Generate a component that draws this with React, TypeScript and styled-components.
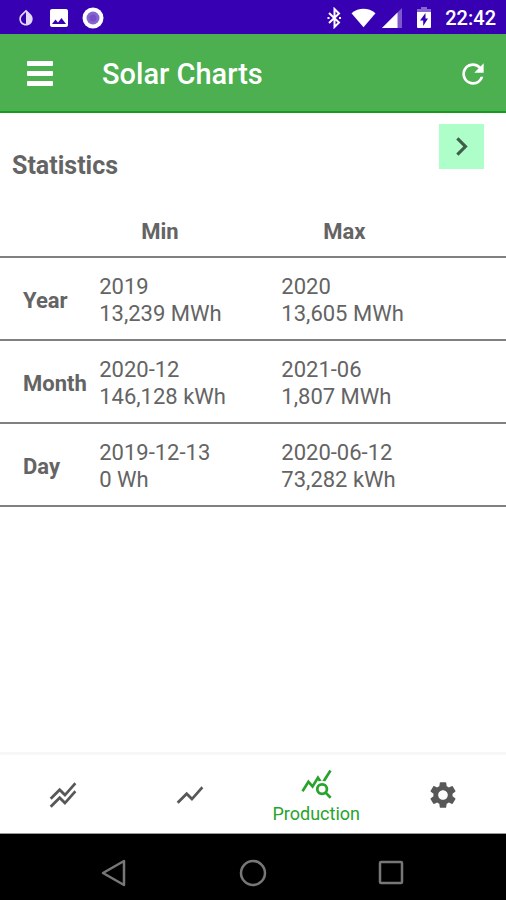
import React from 'react';
import styled, { createGlobalStyle } from 'styled-components';
import {
  MdChevronRight,
  MdImage,
  MdInvertColors,
  MdQueryStats,
  MdRefresh,
  MdSettings,
  MdShowChart,
  MdStackedLineChart,
} from 'react-icons/md';

const GlobalStyle = createGlobalStyle`
  * { box-sizing: border-box; }
  body {
    margin: 0;
    background: #fff;
    color: #646464;
    font-family: Roboto, "Liberation Sans", sans-serif;
  }
  button { font: inherit; border: 0; padding: 0; background: none; cursor: pointer; }
  svg { display: block; flex: none; }
`;

const Screen = styled.div`
  display: flex;
  flex-direction: column;
  min-height: 100vh;
`;

const StatusBar = styled.div`
  display: flex;
  align-items: center;
  justify-content: space-between;
  height: 34px;
  padding: 1px 10px 0 16px;
  background: #3700b3;
  color: #fff;
`;

const StatusGroup = styled.div<{ $gap: number }>`
  display: flex;
  align-items: center;
  gap: ${({ $gap }) => $gap}px;
`;

const Clock = styled.time`
  font-size: 20px;
  font-weight: 500;
  line-height: 24px;
`;

const AppBar = styled.header`
  display: flex;
  align-items: center;
  height: 79px;
  padding: 3px 17px 0 20px;
  background: #4caf50;
  border-bottom: 2px solid #169c1c;
  color: #fff;
`;

const BarButton = styled.button`
  display: grid;
  place-items: center;
  width: 40px;
  height: 40px;
  color: #fff;
`;

const RefreshButton = styled(BarButton)`
  width: 32px;
`;

const AppTitle = styled.h1`
  flex: 1;
  margin: 0 0 0 42px;
  font-size: 29px;
  font-weight: 500;
  line-height: 36px;
`;

const Main = styled.main`
  flex: 1;
`;

const SectionHead = styled.div`
  display: flex;
  align-items: flex-start;
  justify-content: space-between;
  padding: 11px 22px 0 12px;
`;

const SectionTitle = styled.h2`
  margin: 27px 0 0;
  font-size: 25px;
  font-weight: 700;
  line-height: 30px;
`;

const NextButton = styled.button`
  display: grid;
  place-items: center;
  width: 45px;
  height: 45px;
  background: #adfec8;
  color: #3f5d49;
`;

const StatsTable = styled.table`
  width: 100%;
  margin-top: 37px;
  border-collapse: collapse;
  table-layout: fixed;
  font-size: 22px;
  line-height: 27px;
  text-align: left;

  tr { border-bottom: 2px solid #808080; }
`;

const Column = styled.col<{ $share?: string }>`
  width: ${({ $share }) => $share ?? 'auto'};
`;

const ColumnHead = styled.th`
  padding: 0 0 11px 42px;
  font-weight: 700;
`;

const RowHead = styled.th`
  padding: 3px 0 0 23px;
  font-weight: 700;
`;

const Value = styled.td`
  padding: 15px 0 12px;
`;

const TabBar = styled.nav`
  display: grid;
  grid-template-columns: repeat(4, 1fr);
  height: 82px;
  border-top: 3px solid #f7f7f7;
  border-bottom: 1px solid #9a9a9a;
`;

const Tab = styled.button<{ $active?: boolean }>`
  display: flex;
  flex-direction: column;
  align-items: center;
  justify-content: center;
  gap: 4px;
  padding-top: 2px;
  color: ${({ $active }) => ($active ? '#28a32d' : '#585858')};
`;

const TabLabel = styled.span`
  font-size: 18px;
  line-height: 20px;
`;

const SystemBar = styled.div`
  display: flex;
  align-items: center;
  justify-content: center;
  gap: 98px;
  height: 66px;
  padding-top: 12px;
  background: #000;
`;

const SystemButton = styled.button`
  display: grid;
  place-items: center;
  width: 40px;
  height: 40px;
`;

const RecordIcon = () => (
  <svg width="22" height="22" viewBox="0 0 22 22" aria-hidden="true">
    <circle cx="11" cy="11" r="10.5" fill="#fff" />
    <circle cx="11" cy="11" r="6.5" fill="#8766d0" />
    <circle cx="11" cy="11" r="3.5" fill="#7550c8" />
  </svg>
);

const BluetoothIcon = () => (
  <svg width="22" height="22" viewBox="0 0 22 22" fill="none" stroke="#fff" strokeWidth="2" aria-hidden="true">
    <path d="M6 6l10 9.500-4.500 4.500V2L16 6.500 6 16" />
    <path d="M4.500 11h2M16 11h2" />
  </svg>
);

const WifiIcon = () => (
  <svg width="25" height="20" viewBox="0 0 26 20" aria-hidden="true">
    <path d="M.5 5C8-1 18-1 25.500 5L13 19.500z" fill="#fff" />
  </svg>
);

const SignalIcon = () => (
  <svg width="21" height="20" viewBox="0 0 21 20" aria-hidden="true">
    <path d="M0 20 20 0v20z" fill="#fff" opacity=".35" />
    <path d="M0 20 15.500 4.500V20z" fill="#fff" />
  </svg>
);

const BatteryIcon = () => (
  <svg width="14" height="22" viewBox="0 0 14 22" aria-hidden="true">
    <path d="M4 0h6v2h4v4H0V2h4z" fill="#fff" opacity=".4" />
    <path d="M0 5h14v15a1 1 0 0 1-1 1H1a1 1 0 0 1-1-1z" fill="#fff" />
    <path d="M8.500 6 3 13.500h3.200V19L11 11.500H8.500z" fill="#3700b3" />
  </svg>
);

const MenuIcon = () => (
  <svg width="26" height="26" viewBox="0 0 26 26" fill="#fff" aria-hidden="true">
    <rect y="0" width="26" height="5" rx="1" />
    <rect y="10" width="26" height="5" rx="1" />
    <rect y="20" width="26" height="5" rx="1" />
  </svg>
);

const systemIcons = [
  { label: 'Back', shape: <path d="M24 3v24L3 15z" /> },
  { label: 'Home', shape: <circle cx="15" cy="15" r="12" /> },
  { label: 'Recent apps', shape: <rect x="4" y="4" width="22" height="21" rx="1" /> },
];

const rows = [
  { period: 'Year', min: ['2019', '13,239 MWh'], max: ['2020', '13,605 MWh'] },
  { period: 'Month', min: ['2020-12', '146,128 kWh'], max: ['2021-06', '1,807 MWh'] },
  { period: 'Day', min: ['2019-12-13', '0 Wh'], max: ['2020-06-12', '73,282 kWh'] },
];

export default function App() {
  return (
    <Screen>
      <GlobalStyle />
      <StatusBar>
        <StatusGroup $gap={11}>
          <MdInvertColors size={20} color="#e2daf5" />
          <MdImage size={24} />
          <RecordIcon />
        </StatusGroup>
        <StatusGroup $gap={14}>
          <StatusGroup $gap={6}>
            <BluetoothIcon />
            <WifiIcon />
            <SignalIcon />
          </StatusGroup>
          <BatteryIcon />
          <Clock>22:42</Clock>
        </StatusGroup>
      </StatusBar>

      <AppBar>
        <BarButton type="button" aria-label="Menu"><MenuIcon /></BarButton>
        <AppTitle>Solar Charts</AppTitle>
        <RefreshButton type="button" aria-label="Refresh"><MdRefresh size={32} /></RefreshButton>
      </AppBar>

      <Main>
        <SectionHead>
          <SectionTitle>Statistics</SectionTitle>
          <NextButton type="button" aria-label="Next"><MdChevronRight size={37} /></NextButton>
        </SectionHead>
        <StatsTable>
          <colgroup>
            <Column $share="19.6%" />
            <Column $share="36%" />
            <Column />
          </colgroup>
          <thead>
            <tr>
              <td />
              <ColumnHead scope="col">Min</ColumnHead>
              <ColumnHead scope="col">Max</ColumnHead>
            </tr>
          </thead>
          <tbody>
            {rows.map(({ period, min, max }) => (
              <tr key={period}>
                <RowHead scope="row">{period}</RowHead>
                <Value>{min[0]}<br />{min[1]}</Value>
                <Value>{max[0]}<br />{max[1]}</Value>
              </tr>
            ))}
          </tbody>
        </StatsTable>
      </Main>

      <TabBar>
        <Tab type="button" aria-label="Comparison"><MdStackedLineChart size={32} /></Tab>
        <Tab type="button" aria-label="Chart"><MdShowChart size={32} /></Tab>
        <Tab type="button" aria-current="page" $active>
          <MdQueryStats size={33} />
          <TabLabel>Production</TabLabel>
        </Tab>
        <Tab type="button" aria-label="Settings"><MdSettings size={32} /></Tab>
      </TabBar>

      <SystemBar>
        {systemIcons.map(({ label, shape }) => (
          <SystemButton key={label} type="button" aria-label={label}>
            <svg width="30" height="30" viewBox="0 0 30 30" fill="none" stroke="#777" strokeWidth="2.500" strokeLinejoin="round" aria-hidden="true">
              {shape}
            </svg>
          </SystemButton>
        ))}
      </SystemBar>
    </Screen>
  );
}
